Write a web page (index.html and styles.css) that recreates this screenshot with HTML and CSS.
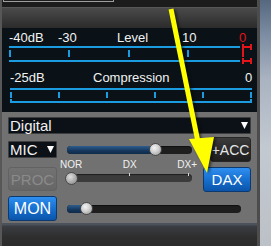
FILE: index.html
```html
<!DOCTYPE html>
<html lang="en">
<head>
    <meta charset="UTF-8">
    <title>TX Panel</title>
    <link rel="stylesheet" href="styles.css">
</head>
<body>
    <div class="screen">
        <div class="window">
            <div class="topbar"><div class="field-edge"></div></div>
            <div class="header"></div>

            <!-- Meters -->
            <div class="meter">
                <div class="scale-labels level-labels">
                    <span>-40dB</span><span>-30</span><span>Level</span><span>10</span><span class="red">0</span>
                </div>
                <div class="line-row"><div class="blue-line"></div><div class="red-cap"></div></div>
                <div class="tick-row">
                    <div class="ticks level-ticks"><i></i><i></i><i></i><i></i></div>
                    <i class="red-tick"></i>
                </div>
                <div class="line-row low"><div class="blue-line"></div><div class="red-cap"></div></div>

                <div class="scale-labels comp-labels">
                    <span>-25dB</span><span>Compression</span><span>0</span>
                </div>
                <div class="comp-line"></div>
                <div class="ticks comp-ticks"><i></i><i></i><i></i><i></i><i></i><i></i></div>
                <div class="comp-base"></div>
            </div>

            <!-- Controls -->
            <div class="panel">
                <div class="select wide">
                    <span>Digital</span>
                    <svg class="caret" viewBox="0 0 7 7"><polygon points="0,0 7,0 3.5,7" fill="#fff"/></svg>
                </div>

                <div class="row row-mic">
                    <div class="select mic">
                        <span>MIC</span>
                        <svg class="caret" viewBox="0 0 7 7"><polygon points="0,0 7,0 3.5,7" fill="#fff"/></svg>
                    </div>
                    <div class="slider mic-slider">
                        <div class="fill" style="width: 88px"></div>
                        <div class="thumb"></div>
                    </div>
                    <div class="btn acc">+ACC</div>
                </div>

                <div class="row row-dx">
                    <div class="btn proc">PROC</div>
                    <div class="dx-col">
                        <div class="dx-labels"><span>NOR</span><span>DX</span><span>DX+</span></div>
                        <div class="slider off">
                            <div class="thumb first"></div>
                            <i class="mark m1"></i>
                            <i class="mark m2"></i>
                        </div>
                    </div>
                    <div class="btn blue dax">DAX</div>
                </div>

                <div class="row row-mon">
                    <div class="btn blue mon">MON</div>
                    <div class="slider mon-slider">
                        <div class="fill" style="width: 19px"></div>
                        <div class="thumb"></div>
                    </div>
                </div>
            </div>

            <div class="footer"></div>
        </div>
        <div class="desktop"></div>

        <!-- annotation arrow -->
        <svg class="arrow" viewBox="0 0 271 246">
            <line x1="171" y1="9" x2="198" y2="142" stroke="#ffff00" stroke-width="5"/>
            <polygon points="189,139 214,137 207,173" fill="#ffff00"/>
        </svg>
    </div>
</body>
</html>
```

FILE: styles.css
```css
:root {
    --blue: #1b9be0;
    --red: #e3141a;
    --meter-bg: #0a1217;
    --panel: #717171;
    --text: #f2f2f2;
}

* {
    box-sizing: border-box;
}

body {
    margin: 0;
    background: #1c1c1c;
    font-family: "Liberation Sans", Arial, sans-serif;
    color: var(--text);
}

.screen {
    position: relative;
    display: flex;
    width: 271px;
    height: 246px;
    overflow: hidden;
}

.window {
    width: 260px;
    flex: none;
    background: #1c1c1c;
    border-left: 2px solid #575757;
    border-right: 3px solid #4c4c4c;
}

.topbar {
    height: 7px;
}

.field-edge {
    margin-left: 1px;
    width: 111px;
    height: 2px;
    border: 1px solid #9e9e9e;
    border-top: none;
}

.header {
    height: 21px;
    border-top: 1px solid #575757;
    background: linear-gradient(#4a4a4a, #2b2b2b);
}

/* meters */
.meter {
    background: var(--meter-bg);
    padding: 3px 0 9px 7px;
}

.scale-labels {
    display: grid;
    font-size: 13px;
    white-space: nowrap;
}

.level-labels {
    grid-template-columns: 49px 59px 65px 57px auto;
    line-height: 13px;
}

.red {
    color: var(--red);
}

.line-row {
    display: flex;
    align-items: center;
    height: 6px;
}

.line-row.low {
    margin-top: 1px;
}

.blue-line {
    width: 231px;
    height: 2px;
    background: var(--blue);
}

.red-cap {
    width: 10px;
    height: 6px;
    margin-left: 2px;
    border-left: 2px solid var(--red);
    border-right: 2px solid var(--red);
    background: linear-gradient(var(--red), var(--red)) center / 100% 2px no-repeat;
}

.tick-row {
    display: flex;
    height: 7px;
}

.ticks {
    display: flex;
    justify-content: space-between;
}

.ticks i {
    width: 2px;
    background: var(--blue);
}

.level-ticks {
    width: 180px;
}

.red-tick {
    width: 2px;
    margin-left: 53px;
    background: var(--red);
}

.comp-labels {
    grid-template-columns: 83px 152px auto;
    margin: 7px 0 0 1px;
    line-height: 14px;
}

.comp-line {
    width: 242px;
    height: 2px;
    margin: 3px 0 0 1px;
    background: var(--blue);
}

.comp-ticks {
    width: 242px;
    height: 6px;
    margin: 2px 0 0 1px;
}

.comp-base {
    width: 242px;
    height: 4px;
    margin: 1px 0 0 1px;
    border: 2px solid var(--blue);
    border-top: none;
}

/* control panel */
.panel {
    background: var(--panel);
    padding: 5px 0 2px 6px;
}

.select {
    display: flex;
    align-items: center;
    justify-content: space-between;
    height: 17px;
    padding: 0 2px 0 1px;
    background: #0b1116;
    border: 1px solid #3e3e3e;
    border-radius: 1px;
    font-size: 15px;
    line-height: 15px;
}

.select.wide {
    width: 243px;
}

.select.mic {
    width: 49px;
}

.caret {
    width: 7px;
    height: 7px;
}

.row {
    display: flex;
}

.row-mic {
    margin-top: 3px;
    align-items: center;
    height: 25px;
}

.slider {
    display: flex;
    align-items: center;
    position: relative;
    height: 8px;
    border-radius: 4px;
    background: #1e1e1e;
    box-shadow: inset 0 1px 1px rgba(0, 0, 0, 0.5);
}

.fill {
    height: 8px;
    border-radius: 4px 0 0 4px;
    background: linear-gradient(#2e5d8e, #15365c 60%, #0f2a48);
}

.thumb {
    flex: none;
    width: 13px;
    height: 13px;
    margin-left: -6px;
    border-radius: 50%;
    border: 1px solid #4a4a4a;
    background: radial-gradient(circle at 40% 35%, #f4f4f4, #cfcfcf 45%, #8e8e8e);
}

.mic-slider {
    width: 125px;
    margin-left: 10px;
}

.btn {
    height: 25px;
    border-radius: 3px;
    text-align: center;
    font-size: 15px;
    line-height: 24px;
}

.acc {
    width: 41px;
    margin-left: 18px;
    font-size: 14px;
    color: #e6e6e6;
    border: 1px solid #262626;
    background: linear-gradient(#3c3c3c, #2a2a2a 50%, #1e1e1e);
}

.blue {
    color: #fff;
    border: 1px solid #0c3a70;
    background: linear-gradient(#2f8ff0, #1670d0 50%, #0b55aa);
}

.row-dx {
    align-items: flex-start;
}

.proc {
    width: 49px;
    height: 24px;
    margin-top: 5px;
    color: #8a8a8a;
    border: 1px solid #626262;
    background: linear-gradient(#727272, #666666);
}

.dx-col {
    width: 125px;
    margin-left: 10px;
}

.dx-labels {
    display: flex;
    justify-content: space-between;
    margin: -2px -5px 0 -7px;
    font-size: 10px;
    line-height: 10px;
}

.slider.off {
    margin-top: 4px;
    background: #3b3b3b;
}

.thumb.first {
    margin-left: -2px;
    background: radial-gradient(circle at 40% 35%, #dedede, #b4b4b4 45%, #7e7e7e);
}

.mark {
    position: absolute;
    top: -1px;
    width: 1px;
    height: 3px;
    background: #d8d8d8;
}

.m1 {
    left: 62px;
}

.m2 {
    left: 121px;
}

.dax {
    width: 48px;
    margin: 5px 0 0 11px;
}

.row-mon {
    margin-top: 4px;
    align-items: center;
}

.mon {
    width: 49px;
    font-size: 16px;
}

.mon-slider {
    width: 174px;
    margin-left: 10px;
}

.footer {
    height: 30px;
    background: linear-gradient(#4b525b 0, #4b525b 2px, #3a3d42 3px, #2e2e2e 14px, #2a2a2a);
}

.desktop {
    flex: 1;
    background: linear-gradient(#55687f, #7c8ca2 14%, #a9b3c1 32%, #c3c9d1 60%, #bcc1c7);
}

.arrow {
    position: absolute;
    left: 0;
    top: 0;
    width: 271px;
    height: 246px;
    pointer-events: none;
    filter: drop-shadow(2px 1px 1.5px rgba(0, 0, 0, 0.55));
}
```
